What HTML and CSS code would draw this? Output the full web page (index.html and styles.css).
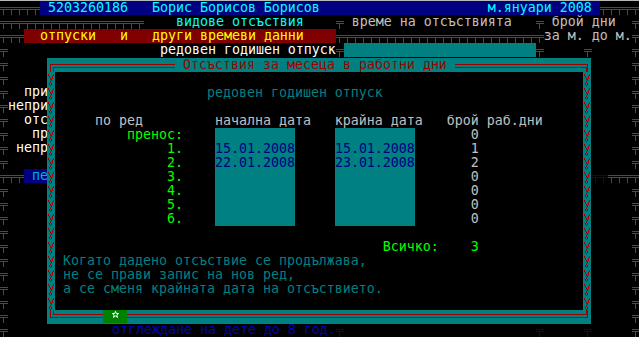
FILE: index.html
```html
<!DOCTYPE html>
<html lang="bg">
<head>
    <meta charset="UTF-8">
    <title>Отсъствия за месеца</title>
    <link rel="stylesheet" href="styles.css">
</head>
<body>

    <!-- Text mode screen: 80 cols x 24 rows, 8x14 cells -->
    <div class="screen">
        <div class="row"><span class="tk">     </span><span class="bg-nv cy"> 5203260186   Борис Борисов Борисов                     м.януари 2008 </span><span class="tk">     </span></div>
        <div class="row"><span class="tk">                  </span>    <span class="cy">видове отсъствия</span>    <span class="tk"> </span> време на отсъствията   <span class="tk"> </span> брой дни  <span class="tk"> </span></div>
        <div class="row"><span class="tk">   </span><span class="bg-rd yl">  отпуски   и   други времеви данни    </span><span class="tk">                          </span>за м. до м.<span class="tk"> </span></div>
        <div class="row"><span class="tk"> </span>                   <span class="wh">редовен годишен отпуск</span><span class="tk"> </span><span class="bg-tl">                        </span><span class="tk"> </span>     <span class="tk"> </span>     <span class="tk"> </span></div>
        <div class="row"><span class="tk"> </span><span class="tk end"> </span></div>
        <div class="row"><span class="tk"> </span><span class="tk end"> </span></div>
        <div class="row"><span class="tk"> </span><span class="wh">  при</span><span class="tk end"> </span></div>
        <div class="row"><span class="tk"> </span><span class="wh">непри</span><span class="tk end"> </span></div>
        <div class="row"><span class="tk"> </span><span class="wh">  отс</span><span class="tk end"> </span></div>
        <div class="row"><span class="tk"> </span><span class="wh">   пр</span><span class="tk end"> </span></div>
        <div class="row"><span class="tk"> </span><span class="wh"> непр</span><span class="tk end"> </span></div>
        <div class="row"><span class="tk"> </span><span class="tk end"> </span></div>
        <div class="row"><span class="tk">   </span><span class="bg-nv pe"> пе</span><span class="end"><span class="tk tb">  </span><span class="tk">    </span></span></div>
        <div class="row"><span class="tk"> </span><span class="tk end"> </span></div>
        <div class="row"><span class="tk"> </span><span class="tk end"> </span></div>
        <div class="row"><span class="tk"> </span><span class="tk end"> </span></div>
        <div class="row"><span class="tk"> </span><span class="tk end"> </span></div>
        <div class="row"><span class="tk"> </span><span class="tk end"> </span></div>
        <div class="row"><span class="tk"> </span><span class="tk end"> </span></div>
        <div class="row"><span class="tk"> </span><span class="tk end"> </span></div>
        <div class="row"><span class="tk"> </span><span class="tk end"> </span></div>
        <div class="row"><span class="tk"> </span><span class="tk end"> </span></div>
        <div class="row"><span class="tk"> </span><span class="tk end"> </span></div>
        <div class="row"><span class="tk"> </span>             <span class="bl">отглеждане на дете до 8 год.</span><span class="tk tb"> </span>                        <span class="tk tb"> </span>     <span class="tk tb"> </span>     <span class="tk"> </span></div>

        <!-- Dialog window -->
        <div class="dlg">
            <div class="dlg-top">
                <span class="fr-tl"><i></i></span>
                <span class="dlg-title">Отсъствия за месеца в работни дни</span>
                <span class="fr-tr"><i></i></span>
            </div>

            <div class="dlg-mid">
                <svg class="side" width="8" height="238" shape-rendering="crispEdges">
                    <defs>
                        <pattern id="vv" width="8" height="14" patternUnits="userSpaceOnUse">
                            <path d="M1 2h1v2H1z M2 4h1v2H2z M3 6h1v2H3z M4 8h1v1H4z M6 2h1v2H6z M5 4h1v3H5z M4 7h1v2H4z M3 9h1v2H3z M2 11h1v2H2z M3 13h1v1H3z M4 11h1v2H4z" fill="#a00000"/>
                        </pattern>
                    </defs>
                    <rect width="8" height="238" fill="url(#vv)"/>
                </svg>

                <div class="dlg-body">
                    <div class="row"></div>
                    <div class="row">                   <span class="tl">редовен годишен отпуск</span></div>
                    <div class="row"></div>
                    <div class="row">     по ред         начална дата   крайна дата   брой раб.дни</div>
                    <div class="row">         <span class="gr">пренос:</span>    <span class="fld">          </span>     <span class="fld">          </span>       0</div>
                    <div class="row">              <span class="gr">1.</span>    <span class="fld">15.01.2008</span>     <span class="fld">15.01.2008</span>       1</div>
                    <div class="row">              <span class="gr">2.</span>    <span class="fld">22.01.2008</span>     <span class="fld">23.01.2008</span>       2</div>
                    <div class="row">              <span class="gr">3.</span>    <span class="fld">          </span>     <span class="fld">          </span>       0</div>
                    <div class="row">              <span class="gr">4.</span>    <span class="fld">          </span>     <span class="fld">          </span>       0</div>
                    <div class="row">              <span class="gr">5.</span>    <span class="fld">          </span>     <span class="fld">          </span>       0</div>
                    <div class="row">              <span class="gr">6.</span>    <span class="fld">          </span>     <span class="fld">          </span>       0</div>
                    <div class="row"></div>
                    <div class="row">                                         <span class="gr">Всичко:    3</span></div>
                    <div class="row"> <span class="tl">Когато дадено отсъствие се продължава,</span></div>
                    <div class="row"> <span class="tl">не се прави запис на нов ред,</span></div>
                    <div class="row"> <span class="tl">а се сменя крайната дата на отсъствието.</span></div>
                    <div class="row"></div>
                </div>

                <svg class="side" width="8" height="238" shape-rendering="crispEdges">
                    <rect width="8" height="238" fill="url(#vv)"/>
                </svg>
            </div>

            <div class="dlg-bot">
                <span class="fr-bl"><i></i></span>
                <span class="star-btn">
                    <svg width="7" height="7" viewBox="0 0 7 7"><polygon points="3.5,0.3 4.3,2.5 6.7,2.5 4.8,3.9 5.5,6.4 3.5,5 1.5,6.4 2.2,3.9 0.3,2.5 2.7,2.5" fill="none" stroke="#fff" stroke-width="1"/></svg>
                </span>
                <span class="fr-br"><i></i></span>
            </div>
        </div>
    </div>

</body>
</html>
```

FILE: styles.css
```css
/* Basic Reset */
* {
    margin: 0;
    padding: 0;
    box-sizing: border-box;
}
html {
    overflow: hidden;
}
body {
    width: 640px;
    height: 337px;
    background: #000;
    color: #c0c0c0;
    font-family: 'DejaVu Sans Mono', monospace;
    font-size: 13.29px;
    overflow: hidden;
}

/* Screen grid */
.screen {
    position: relative;
    width: 640px;
    border-top: 1px solid #b8b8b8;
}
.row {
    height: 14px;
    line-height: 14px;
    white-space: pre;
}
.row > span {
    display: inline-block;
    height: 14px;
    vertical-align: top;
}
.end {
    float: right;
}

/* Box drawing ticks (like ╤) */
.tk {
    --c: #008000;
    display: inline-block;
    height: 14px;
    vertical-align: top;
    background:
        linear-gradient(var(--c), var(--c)) 0 6px / 100% 1px no-repeat,
        linear-gradient(var(--c), var(--c)) 0 8px / 100% 1px no-repeat,
        linear-gradient(90deg, transparent 3px, var(--c) 3px, var(--c) 4px, transparent 4px) 0 9px / 8px 5px repeat-x;
}
.tk.tb {
    --c: #0000a0;
}

/* Colours */
.cy { color: #00ffff; }
.wh { color: #fff; }
.yl { color: #ffff00; }
.gr { color: #00ff00; }
.tl { color: #008080; }
.bl { color: #0000c0; }
.pe { color: #00b0d0; }
.bg-nv { background: #000080; }
.bg-rd { background: #800000; }
.bg-tl { background: #008080; }

/* Dialog */
.dlg {
    position: absolute;
    left: 47px;
    top: 57px;
    width: 544px;
    height: 266px;
    background: #008080;
    display: flex;
    flex-direction: column;
}
.dlg-top,
.dlg-bot {
    height: 14px;
    display: flex;
    flex: none;
}
.dlg-title {
    margin: 0 8px;
    color: #a00000;
    line-height: 14px;
    white-space: pre;
}
.dlg-mid {
    flex: 1;
    display: flex;
}
.side {
    width: 8px;
    height: 238px;
    flex: none;
    display: block;
}
.dlg-body {
    flex: 1;
    background: #000;
}
.fld {
    background: #008080;
    color: #000080;
}

/* Double line frame */
.fr-tl, .fr-tr, .fr-bl, .fr-br,
.fr-tl i, .fr-tr i, .fr-bl i, .fr-br i {
    display: block;
    border: 0 solid #a00000;
}
.fr-tl {
    width: 125px;
    height: 8px;
    margin: 6px 0 0 3px;
    border-width: 1px 0 0 1px;
}
.fr-tl i {
    height: 5px;
    margin: 2px 0 0 2px;
    border-width: 1px 0 0 1px;
}
.fr-tr {
    flex: 1;
    height: 8px;
    margin: 6px 3px 0 0;
    border-width: 1px 1px 0 0;
}
.fr-tr i {
    height: 5px;
    margin-top: 2px;
    border-width: 1px 1px 0 0;
}
.fr-bl {
    width: 53px;
    height: 8px;
    margin-left: 3px;
    border-width: 0 0 1px 1px;
}
.fr-bl i {
    height: 5px;
    margin-left: 2px;
    border-width: 0 0 1px 1px;
}
.fr-br {
    flex: 1;
    height: 8px;
    margin-right: 3px;
    border-width: 0 1px 1px 0;
}
.fr-br i {
    height: 5px;
    border-width: 0 1px 1px 0;
}
.star-btn {
    width: 24px;
    height: 13px;
    background: #008000;
    display: flex;
    justify-content: center;
    padding-top: 1px;
}
.star-btn svg {
    display: block;
}
```
